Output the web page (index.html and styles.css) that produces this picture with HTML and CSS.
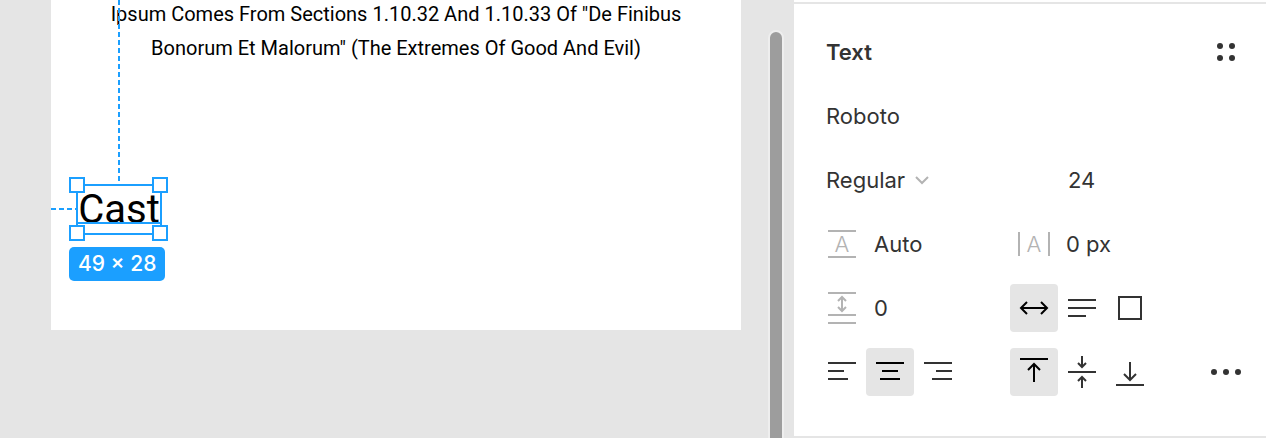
FILE: index.html
```html
<!DOCTYPE html>
<html lang="en">
<head>
<meta charset="utf-8">
<title>Design editor</title>
<link rel="stylesheet" href="styles.css">
</head>
<body>
<main class="canvas">
  <div class="artboard">
    <p class="copy">Ipsum Comes From Sections 1.10.32 And 1.10.33 Of "De Finibus<br>Bonorum Et Malorum" (The Extremes Of Good And Evil)</p>
    <div class="guide guide-vertical"></div>
    <div class="guide guide-horizontal"></div>
    <div class="selection">
      <span class="layer-text">Cast</span>
      <span class="baseline"></span>
      <span class="handle top left"></span>
      <span class="handle top right"></span>
      <span class="handle bottom left"></span>
      <span class="handle bottom right"></span>
    </div>
    <div class="size-badge">49 × 28</div>
  </div>
  <div class="scrollbar"></div>
</main>
<aside class="panel">
  <section class="text-section">
    <h2 class="title">Text</h2>
    <button class="tool last" aria-label="Text styles"><svg viewBox="0 0 48 48" class="dots"><circle cx="18" cy="18" r="3"/><circle cx="30" cy="18" r="3"/><circle cx="18" cy="30" r="3"/><circle cx="30" cy="30" r="3"/></svg></button>

    <input class="value family" aria-label="Font family" value="Roboto">

    <div class="weight">
      <select class="value" aria-label="Font weight"><option>Regular</option></select>
      <svg class="chevron" viewBox="0 0 16 16"><path d="M2 5l6 6 6-6"/></svg>
    </div>
    <input class="value size" aria-label="Font size" value="24">

    <label class="field row-start">
      <svg class="muted" viewBox="0 0 48 48" role="img" aria-label="Line height"><path d="M10 11h28M10 37h28"/><text x="24" y="32">A</text></svg>
      <input class="value" value="Auto">
    </label>
    <label class="field">
      <svg class="muted" viewBox="0 0 48 48" role="img" aria-label="Letter spacing"><path d="M9 12v24M39 12v24"/><text x="24" y="32">A</text></svg>
      <input class="value" value="0 px">
    </label>

    <label class="field row-start">
      <svg class="muted" viewBox="0 0 48 48" role="img" aria-label="Paragraph spacing"><path d="M10 9h28M10 31h28M10 39h28M24 13v14M20 17l4-4 4 4M20 23l4 4 4-4"/></svg>
      <input class="value" value="0">
    </label>
    <div class="tools">
      <button class="tool active" aria-label="Auto width"><svg viewBox="0 0 48 48"><path d="M12 24h24M17 18l-6 6 6 6M31 18l6 6-6 6"/></svg></button>
      <button class="tool" aria-label="Auto height"><svg viewBox="0 0 48 48"><path d="M10 16h28M10 24h28M10 32h18"/></svg></button>
      <button class="tool" aria-label="Fixed size"><svg viewBox="0 0 48 48"><path d="M13 13h22v22h-22z"/></svg></button>
    </div>

    <div class="tools row-start">
      <button class="tool" aria-label="Align left"><svg viewBox="0 0 48 48"><path d="M10 15h28M10 23h16M10 31h20"/></svg></button>
      <button class="tool active" aria-label="Align center"><svg viewBox="0 0 48 48"><path d="M10 15h28M16 23h16M14 31h20"/></svg></button>
      <button class="tool" aria-label="Align right"><svg viewBox="0 0 48 48"><path d="M10 15h28M22 23h16M18 31h20"/></svg></button>
    </div>
    <div class="tools">
      <button class="tool active" aria-label="Align top"><svg viewBox="0 0 48 48"><path d="M10 11h28M24 34V16M18 22l6-6 6 6"/></svg></button>
      <button class="tool" aria-label="Align middle"><svg viewBox="0 0 48 48"><path d="M10 24h28M24 8v11M20 15l4 4 4-4M24 40V29M20 33l4-4 4 4"/></svg></button>
      <button class="tool" aria-label="Align bottom"><svg viewBox="0 0 48 48"><path d="M10 37h28M24 14v18M18 26l6 6 6-6"/></svg></button>
    </div>
    <button class="tool last" aria-label="More options"><svg viewBox="0 0 48 48" class="dots"><circle cx="12" cy="24" r="3"/><circle cx="24" cy="24" r="3"/><circle cx="36" cy="24" r="3"/></svg></button>
  </section>
</aside>
</body>
</html>
```
FILE: styles.css
```css
* { box-sizing: border-box; }

body {
  margin: 0;
  min-height: 100vh;
  display: flex;
  overflow: hidden;
  background: #e5e5e5;
  color: #333;
  font: 22px/32px Inter, "Liberation Sans", sans-serif;
}

.canvas {
  position: relative;
  flex: 1;
  padding: 0 53px 0 51px;
}

.artboard {
  display: flow-root;
  position: relative;
  height: 330px;
  background: #fff;
  color: #000;
  font-family: Roboto, sans-serif;
}

.copy {
  margin: -3px 0 0;
  font-size: 20px;
  line-height: 34px;
  text-align: center;
}

.guide { position: absolute; }

.guide-vertical {
  left: 67px;
  top: 0;
  width: 2px;
  height: 184px;
  background: repeating-linear-gradient(#1b9fff 0 5px, transparent 5px 8px);
}

.guide-horizontal {
  left: 0;
  top: 208px;
  width: 26px;
  height: 2px;
  background: repeating-linear-gradient(90deg, #1b9fff 0 5px, transparent 5px 8px);
}

.selection {
  position: absolute;
  left: 25px;
  top: 184px;
  width: 86px;
  height: 51px;
  border: 2px solid #1b9fff;
  text-align: center;
}

.layer-text {
  font-size: 40px;
  line-height: 47px;
}

.baseline {
  position: absolute;
  left: 0;
  right: 0;
  top: 36px;
  height: 2px;
  background: #1b9fff;
}

.handle {
  position: absolute;
  width: 16px;
  height: 16px;
  border: 2px solid #1b9fff;
  background: #fff;
}

.top { top: -9px; }
.bottom { bottom: -8px; }
.left { left: -9px; }
.right { right: -8px; }

.size-badge {
  position: absolute;
  left: 18px;
  top: 247px;
  padding: 1px 9px;
  border-radius: 5px;
  background: #1b9fff;
  color: #fff;
  font-family: Inter, sans-serif;
  font-size: 21px;
  font-weight: 500;
  white-space: nowrap;
}

.scrollbar {
  position: absolute;
  top: 30px;
  right: 10px;
  bottom: -16px;
  width: 16px;
  border: 2px solid #eee;
  border-radius: 8px;
  background: #9d9d9d;
}

.panel {
  width: 472px;
  padding-top: 2px;
  background: #fff;
}

.text-section {
  display: grid;
  grid-template-columns: 192px 192px 48px;
  grid-auto-rows: 64px;
  align-items: center;
  padding: 16px 16px 32px 24px;
  border-top: 2px solid #e5e5e5;
  border-bottom: 2px solid #e5e5e5;
}

.title {
  grid-column: 1 / 3;
  margin: 0;
  padding-left: 8px;
  font-size: 22px;
  font-weight: 600;
}

.value {
  width: 100%;
  min-width: 0;
  height: 32px;
  margin: 0;
  padding: 0;
  border: 0;
  background: none;
  color: inherit;
  font: inherit;
  appearance: none;
}

.family {
  grid-column: 1 / 4;
  padding-left: 8px;
}

.weight {
  display: flex;
  align-items: center;
  gap: 8px;
  padding-left: 8px;
}

.weight .value { width: 80px; }

.size { padding-left: 58px; }

.chevron {
  width: 16px;
  height: 16px;
  fill: none;
  stroke: #b3b3b3;
  stroke-width: 2;
}

.field {
  display: flex;
  align-items: center;
  gap: 8px;
}

.field svg,
.tool svg {
  flex: none;
  width: 48px;
  height: 48px;
  fill: none;
  stroke: currentColor;
  stroke-width: 2;
}

.field .muted { color: #b3b3b3; }

.muted text {
  fill: currentColor;
  stroke: none;
  font-weight: 300;
  text-anchor: middle;
}

.row-start { grid-column: 1; }

.tools { display: flex; }

.tool {
  display: block;
  width: 48px;
  height: 48px;
  padding: 0;
  border: 0;
  border-radius: 4px;
  background: none;
  color: #333;
}

.tool.active {
  background: #e5e5e5;
  color: #000;
}

.tool .dots {
  fill: currentColor;
  stroke: none;
}

.last { grid-column: 3; }
```
